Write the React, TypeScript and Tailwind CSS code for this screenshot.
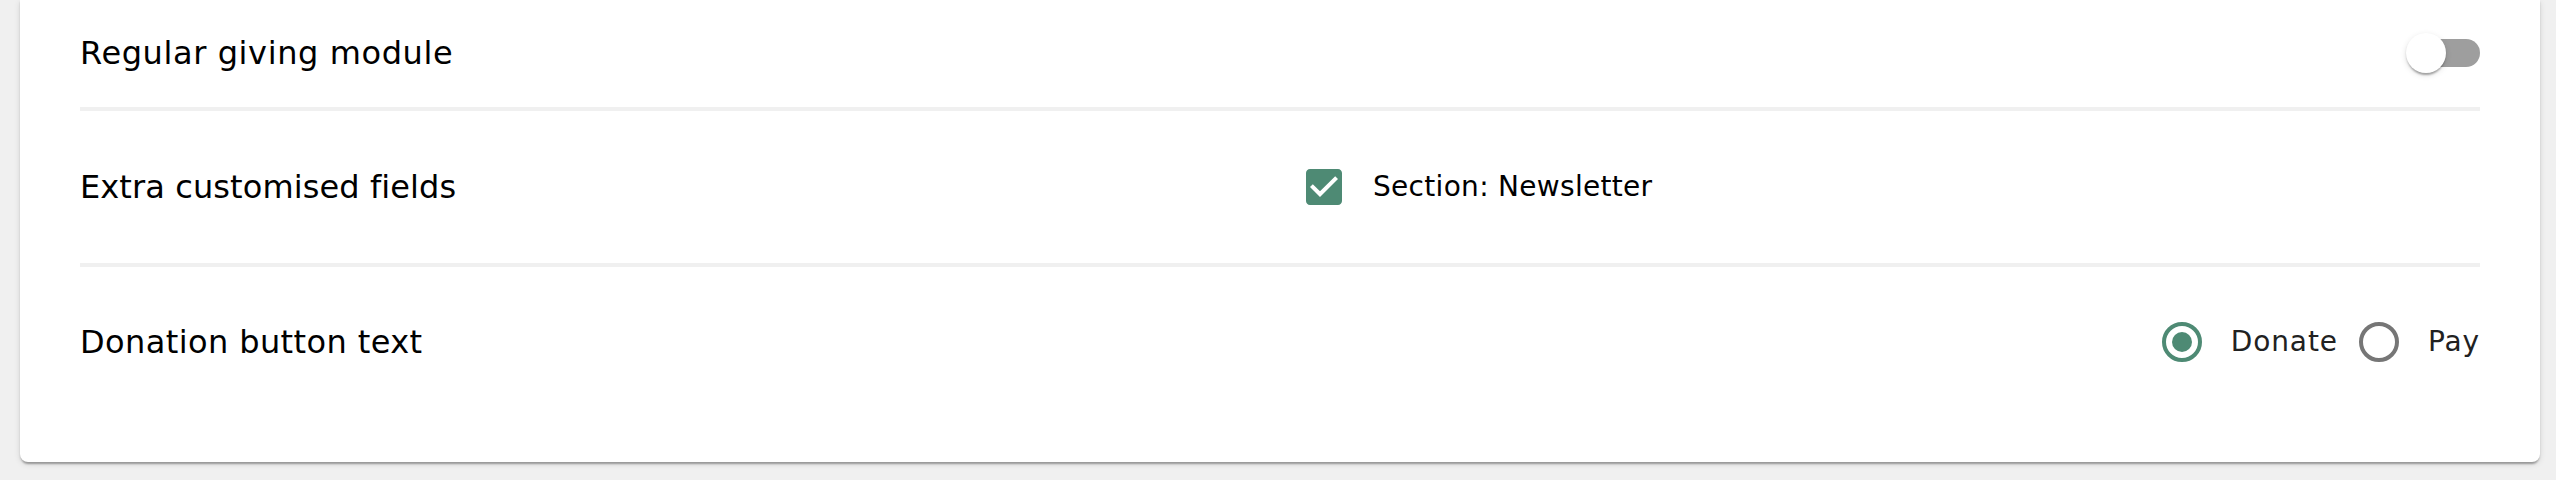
import React from "react";

const font = { fontFamily: '"DejaVu Sans", sans-serif' };

function Divider() {
  return <div className="h-[4px] w-full bg-[#f0f0f0]" />;
}

function Toggle() {
  return (
    <div className="relative h-[40px] w-[74px]">
      <div className="absolute right-0 top-[6px] h-[28px] w-[68px] rounded-[14px] bg-[#9e9e9e]" />
      <div className="absolute left-0 top-0 h-[40px] w-[40px] rounded-full bg-white shadow-[0_4px_2px_-2px_rgba(0,0,0,0.2),0_2px_2px_0_rgba(0,0,0,0.14),0_2px_6px_0_rgba(0,0,0,0.12)]" />
    </div>
  );
}

function CheckIcon() {
  return (
    <svg width="48" height="48" viewBox="0 0 24 24" className="block">
      <path
        fill="#4e8a74"
        d="M19 3H5c-1.11 0-2 .9-2 2v14c0 1.1.89 2 2 2h14c1.11 0 2-.9 2-2V5c0-1.1-.89-2-2-2zm-9 14l-5-5 1.41-1.41L10 14.17l7.59-7.59L19 8l-9 9z"
      />
    </svg>
  );
}

function Radio({ checked }: { checked: boolean }) {
  return (
    <div
      className={
        checked
          ? "flex h-[40px] w-[40px] items-center justify-center rounded-full border-[4px] border-[#4e8a74]"
          : "flex h-[40px] w-[40px] items-center justify-center rounded-full border-[4px] border-[#767676]"
      }
    >
      {checked && <div className="h-[20px] w-[20px] rounded-full bg-[#4e8a74]" />}
    </div>
  );
}

export default function App() {
  return (
    <div className="h-[480px] w-full overflow-hidden bg-[#f0f0f0] pl-[20px] pr-[16px]" style={font}>
      <div className="rounded-b-[8px] bg-white px-[60px] pb-[45px] shadow-[0_4px_2px_-2px_rgba(0,0,0,0.2),0_2px_2px_0_rgba(0,0,0,0.14),0_2px_6px_0_rgba(0,0,0,0.12)]">
        <div className="flex h-[107px] items-center justify-between pb-[2px]">
          <span className="text-[32px] tracking-[0.6px] text-black">Regular giving module</span>
          <Toggle />
        </div>
        <Divider />
        <div className="grid h-[152px] grid-cols-2 items-center">
          <span className="text-[32px] tracking-[0.1px] text-black">Extra customised fields</span>
          <div className="flex items-center pl-[20px]">
            <CheckIcon />
            <span className="ml-[25px] text-[28px] tracking-[0.3px] font-medium text-black">Section: Newsletter</span>
          </div>
        </div>
        <Divider />
        <div className="flex h-[150px] items-center justify-between">
          <span className="text-[32px] tracking-[0.4px] text-black">Donation button text</span>
          <div className="flex items-center gap-[21px] text-[28px] tracking-[0.9px] text-[#212121]">
            <div className="flex items-center">
              <Radio checked={true} />
              <span className="ml-[29px]">Donate</span>
            </div>
            <div className="flex items-center">
              <Radio checked={false} />
              <span className="ml-[29px]">Pay</span>
            </div>
          </div>
        </div>
      </div>
    </div>
  );
}
